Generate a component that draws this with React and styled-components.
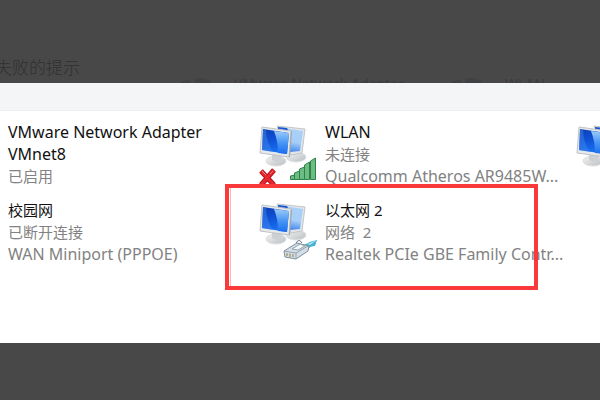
import React, {useId} from 'react';
import styled, {createGlobalStyle} from 'styled-components';

const GlobalStyle = createGlobalStyle`
  body {
    margin: 0;
    background: #484848;
    font-family: "Noto Sans", "Noto Sans CJK SC", sans-serif;
  }
`;

const Page = styled.div`
  min-height: 100vh;
  overflow: hidden;
  background: #484848;
`;

const Backdrop = styled.header`
  display: flex;
  flex-direction: column;
  justify-content: flex-end;
  height: 83px;
  overflow: hidden;
`;

const Caption = styled.p`
  margin: 0 0 0 -5px;
  font-family: "Noto Sans CJK SC", sans-serif;
  font-size: 17px;
  font-weight: 300;
  line-height: 20px;
  color: #303030;
`;

const DimRow = styled.div`
  display: grid;
  grid-template-columns: 54px 217px 54px auto;
  height: 6px;
  padding-left: 180px;
  overflow: hidden;
  font-size: 14px;
  line-height: 14px;
  white-space: nowrap;
  color: #3b3b3f;
`;

const DimIcon = styled.svg`
  width: 36px;
  height: 6px;
`;

const Panel = styled.main`
  min-height: 260px;
  overflow: hidden;
  background: white;
`;

const Toolbar = styled.div`
  height: 27px;
  border-bottom: solid 1px #eceef0;
  background: #f4f5f7;
`;

const Connections = styled.ul`
  display: grid;
  grid-template-columns: repeat(3, 317px);
  grid-auto-rows: 78px;
  margin: 0 0 0 -58px;
  padding: 10px 0 0;
  list-style: none;
`;

const Item = styled.li`
  position: relative;
  display: flex;
`;

const Details = styled.div`
  width: 246px;
  font-size: 16px;
  line-height: 22px;
  color: #828282;
  white-space: nowrap;

  & > :lang(zh) {
    font-size: 15px;
  }
`;

const Name = styled.div`
  width: 236px;
  color: #111;
  white-space: normal;
`;

const Status = styled.div`
  white-space: pre;
`;

const Highlight = styled.div`
  position: absolute;
  top: -15px;
  right: 38px;
  bottom: -13px;
  left: -34px;
  border: solid 4px #fa3a3a;
  box-shadow: inset 1px 0 0 white, inset 2px 0 0 #fbb4b4;
`;

const Icon = styled.svg`
  flex: none;
  width: 66px;
  height: 66px;
  margin-top: 1px;
`;

const Cross = () => (
  <g fill="none">
    <path d="M2 49 L15 63 M15 48 L2 63" stroke="#b3141c" strokeWidth="5" />
    <path d="M2 49 L15 63 M15 48 L2 63" stroke="#e8252e" strokeWidth="3" />
    <path d="M3 49 L7 53 M14 49 L11 52" stroke="#f58a8e" strokeWidth="1" />
  </g>
);

const Signal = () => (
  <g fill="#6cbd83" stroke="#2f8149" strokeWidth="1">
    <path d="M31.5 54 L35.5 53 V57.5 H31.5 Z" />
    <path d="M35.5 51 L40.5 49 V57.5 H35.5 Z" />
    <path d="M40.5 47 L45.5 45 V57.5 H40.5 Z" />
    <path d="M45.5 43 L50.5 40 V57.5 H45.5 Z" />
    <path d="M51.5 39 L56.5 36 V57.5 H51.5 Z" />
  </g>
);

const Plug = () => (
  <g strokeLinejoin="round">
    <path d="M45 45 Q51 41 58 40 L56 46 Q51 46 48 50 Z" fill="#45b5d6" />
    <path d="M48 44 L58 40 L51 45 Z" fill="#a8e2ef" />
    <path d="M25 51 L38 43 L50 46 L49 51 L37 59 L26 57 Z" fill="#d5dee8" stroke="#7e8e99" />
    <path d="M25 51 L37 53 L49 46 M37 53 V59" fill="none" stroke="#93a2ae" />
    <path d="M33 49 L41 44 L46 46 L39 50 Z" fill="#f3f8fa" stroke="#95a4ae" />
    <path d="M37 43 Q40 38 43 43" fill="none" stroke="#6b7e8b" />
    <path d="M28 53 V56 M31 53.5 V57 M34 54 V57" stroke="#a7a077" strokeWidth="1.5" />
  </g>
);

const badges = {
  wireless: <><Cross /><Signal /></>,
  plug: <Plug />,
};

const NetworkIcon = ({badge}) => {
  const id = useId();
  const front = `${id}front`;
  const glare = `${id}glare`;
  const back = `${id}back`;
  const metal = `${id}metal`;

  return (
    <Icon viewBox="0 0 66 66" aria-hidden="true">
      <defs>
        <linearGradient id={front} x1="0" y1="0" x2="0.2" y2="1">
          <stop offset="0" stopColor="#0d3fb4" />
          <stop offset="0.5" stopColor="#0f52d8" />
          <stop offset="1" stopColor="#1a72f2" />
        </linearGradient>
        <linearGradient id={glare} x1="0" y1="0" x2="0" y2="1">
          <stop offset="0" stopColor="#9ccbfa" />
          <stop offset="0.5" stopColor="#4a97f4" />
          <stop offset="1" stopColor="#1a6df0" />
        </linearGradient>
        <linearGradient id={back} x1="0.2" y1="0" x2="0" y2="1">
          <stop offset="0" stopColor="#a9d0f8" />
          <stop offset="0.5" stopColor="#a6cef8" />
          <stop offset="1" stopColor="#2474ea" />
        </linearGradient>
        <linearGradient id={metal} x1="0" y1="0" x2="1" y2="1">
          <stop offset="0" stopColor="#f5f5f5" />
          <stop offset="1" stopColor="#b9bdc0" />
        </linearGradient>
      </defs>
      <ellipse cx="37" cy="35" rx="10" ry="5" fill={`url(#${metal})`} stroke="#dfe1e2" />
      <path d="M18 4 L46 7 L43 31 L32 33 Z" fill="#e2e5e8" stroke="#c3c7ca" />
      <path d="M19 5 L44 9 L41 29 L31 30 Z" fill={`url(#${back})`} />
      <path d="M19 5 L28 6 L30 10 L19 8 Z" fill="#1b58cf" />
      <ellipse cx="17" cy="39" rx="10" ry="5" fill={`url(#${metal})`} stroke="#dcdedf" />
      <path d="M13 31 L23 33 L22 39 Q17 41 13 38 Z" fill="#cdd0d2" />
      <path d="M3 5 L32 9 L30 35 L1 31 Z" fill="#e6e9eb" stroke="#bfc3c7" strokeLinejoin="round" />
      <path d="M32 9 L33 10 L31 35 L30 35 Z" fill="#9fa5aa" />
      <path d="M4 7 L30 11 L28 32 L3 28 Z" fill={`url(#${front})`} />
      <path d="M15 9 L30 11 L28 32 L19 31 Q19 19 15 9 Z" fill={`url(#${glare})`} />
      <path d="M4 7 L7 8 Q7 19 14 30 L3 28 Z" fill="#3f86ea" opacity="0.5" />
      {badges[badge]}
    </Icon>
  );
};

const DimScreens = () => (
  <DimIcon viewBox="0 0 36 6" aria-hidden="true">
    <path d="M1 4 L10 3 V6 H1 Z M14 2 L22 1 L31 4 V6 H14 Z" fill="#414145" />
  </DimIcon>
);

const connections = [
  {name: 'VMware Network Adapter VMnet8', status: '已启用'},
  {
    name: 'WLAN',
    status: '未连接',
    device: 'Qualcomm Atheros AR9485W...',
    badge: 'wireless',
  },
  {},
  {
    name: '校园网',
    lang: 'zh',
    status: '已断开连接',
    device: 'WAN Miniport (PPPOE)',
    badge: 'plug',
  },
  {
    name: '以太网 2',
    lang: 'zh',
    status: '网络  2',
    device: 'Realtek PCIe GBE Family Contr...',
    badge: 'plug',
    selected: true,
  },
];

const App = () => (
  <Page>
    <GlobalStyle />
    <Backdrop>
      <Caption>失败的提示</Caption>
      <DimRow>
        <DimScreens />
        <span>VMware Network Adapter</span>
        <DimScreens />
        <span>WLAN</span>
      </DimRow>
    </Backdrop>
    <Panel>
      <Toolbar />
      <Connections>
        {connections.map(({name, lang, status, device, badge, selected}, index) => (
          <Item key={index}>
            <NetworkIcon badge={badge} />
            {name && (
              <Details>
                <Name lang={lang}>{name}</Name>
                <Status lang="zh">{status}</Status>
                {device && <div>{device}</div>}
              </Details>
            )}
            {selected && <Highlight />}
          </Item>
        ))}
      </Connections>
    </Panel>
  </Page>
);

export default App;
